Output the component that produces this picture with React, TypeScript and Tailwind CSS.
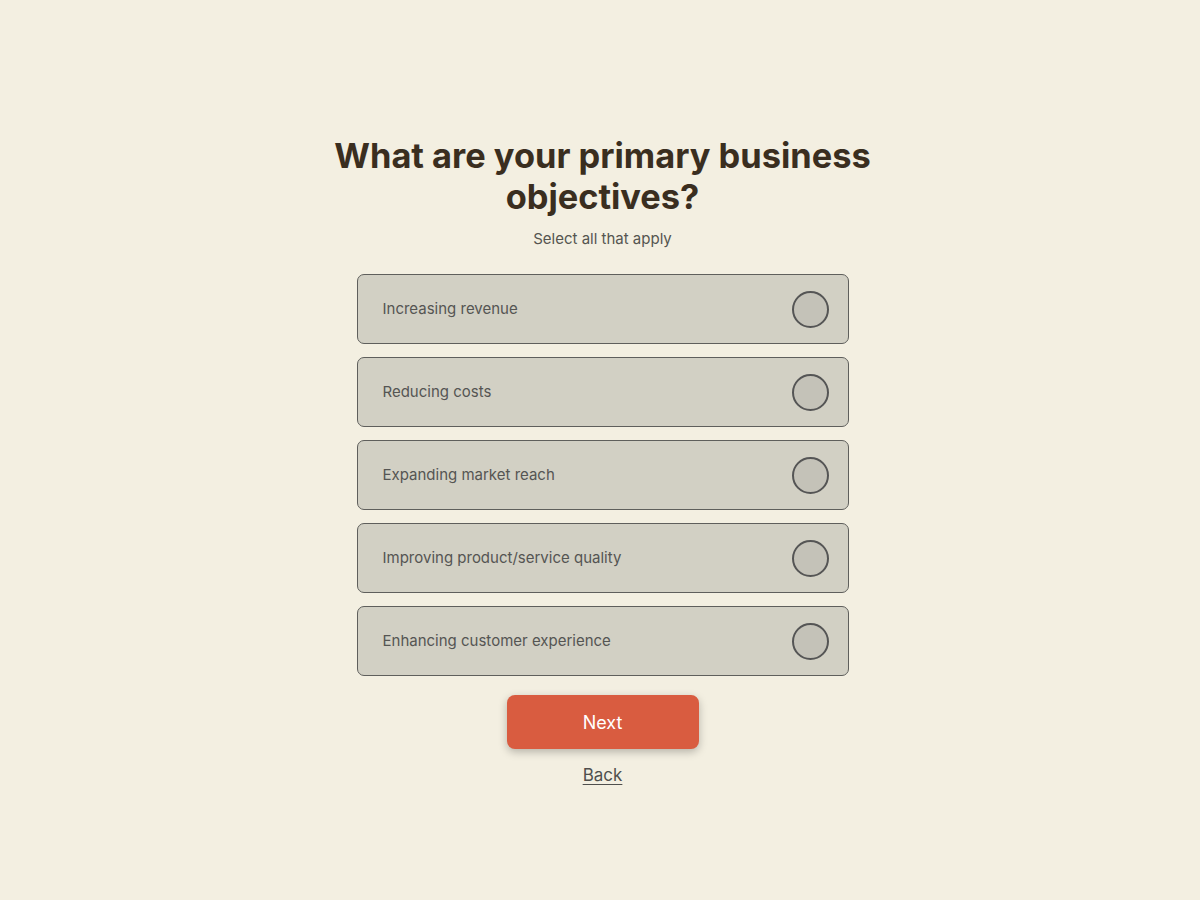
import { useState } from 'react';

const options = [
  'Increasing revenue',
  'Reducing costs',
  'Expanding market reach',
  'Improving product/service quality',
  'Enhancing customer experience',
];

export default function App() {
  const [selected, setSelected] = useState<string[]>([]);

  const toggle = (option: string) => {
    setSelected((prev) => (prev.includes(option) ? prev.filter((o) => o !== option) : [...prev, option]));
  };

  return (
    <div
      className="min-h-[900px] w-full bg-[#f3efe1] flex flex-col items-center pt-[135px]"
      style={{ fontFamily: 'Inter, "Noto Sans", sans-serif' }}
    >
      <div className="w-[576px] flex flex-col items-center pl-[5px]">
        <h1 className="text-[34.4px] leading-[41px] font-bold text-[#3a2e1f] text-center">
          What are your primary business objectives?
        </h1>
        <p className="mt-[11px] text-[15px] leading-[22px] text-[#555550]">Select all that apply</p>

        <div className="mt-[24px] w-[492px] flex flex-col gap-[13px]">
          {options.map((option) => (
            <button
              key={option}
              onClick={() => toggle(option)}
              className="h-[70px] w-full flex items-center justify-between pl-[25px] pr-[19px] rounded-[7px] border-[1.5px] border-[#5f5f5c] bg-[#d2d0c4] text-left"
            >
              <span className="text-[15px] text-[#555553]">{option}</span>
              <span
                className={`w-[37px] h-[37px] rounded-full border-[2.5px] border-[#555555] ${
                  selected.includes(option) ? 'bg-[#d95c40]' : 'bg-[#c4c2b8]'
                }`}
              ></span>
            </button>
          ))}
        </div>

        <button className="mt-[19px] w-[192px] h-[54px] rounded-[8px] bg-[#d95c40] text-white text-[18px] font-normal shadow-[0_3px_8px_rgba(0,0,0,0.25)]">
          Next
        </button>
        <button className="mt-[15px] text-[17px] leading-[22px] text-[#4f4f4d] underline underline-offset-[3px]">Back</button>
      </div>
    </div>
  );
}
